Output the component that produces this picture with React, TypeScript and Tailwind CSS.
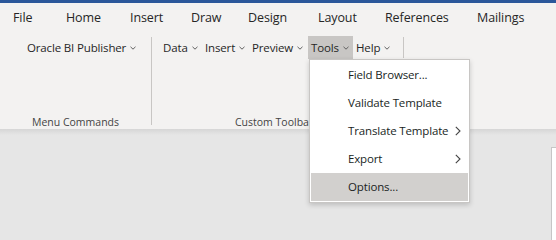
import React from 'react';

const font = '"Segoe UI", "Open Sans", "Noto Sans", sans-serif';

function Caret({ className = '' }: { className?: string }) {
  return (
    <svg width="6" height="4" viewBox="0 0 6 4" className={className} fill="none">
      <path d="M0.5 0.8 L3 3.2 L5.5 0.8" stroke="#5f5f5f" strokeWidth="1" />
    </svg>
  );
}

function Chevron() {
  return (
    <svg width="6" height="10" viewBox="0 0 6 10" fill="none">
      <path d="M0.8 0.8 L5 5 L0.8 9.2" stroke="#444" strokeWidth="1.1" />
    </svg>
  );
}

const tabs: [string, number][] = [
  ['File', 53], ['Home', 64], ['Insert', 61], ['Draw', 57],
  ['Design', 70], ['Layout', 67], ['References', 92], ['Mailings', 70],
];

const toolbar: [string, number][] = [
  ['Data', 42], ['Insert', 47], ['Preview', 59], ['Tools', 45], ['Help', 44],
];

const menuItems = [
  { label: 'Field Browser...' },
  { label: 'Validate Template' },
  { label: 'Translate Template', sub: true },
  { label: 'Export', sub: true },
  { label: 'Options...', active: true },
];

export default function App() {
  return (
    <div
      className="relative w-[556px] h-[240px] overflow-hidden bg-[#e6e6e6]"
      style={{ fontFamily: font }}
    >
      <div className="h-[3px] bg-[#2b579a]" />

      {/* ribbon */}
      <div className="h-[126px] bg-[#f3f2f1] flex flex-col">
        <div className="h-[30px] flex items-center pl-[13px] text-[12.5px] tracking-[-0.1px] text-[#262626]">
          {tabs.map(([t, w]) => (
            <span key={t} className="shrink-0 whitespace-nowrap" style={{ width: w }}>{t}</span>
          ))}
        </div>

        <div className="flex flex-1">
          {/* Menu Commands group */}
          <div className="w-[151px] flex flex-col">
            <div className="mt-[3px] h-[23px] flex items-center pl-[27px] text-[11.5px] tracking-[-0.15px] text-[#262626] whitespace-nowrap">
              <span>Oracle BI Publisher</span>
              <Caret className="ml-[4px] mt-[1px]" />
            </div>
            <div className="mt-auto mb-[-2px] text-center text-[10.5px] text-[#444] whitespace-nowrap">Menu Commands</div>
          </div>

          <div className="w-px bg-[#c8c6c4] mt-[4px] mb-[4px]" />

          {/* Custom Toolbar group */}
          <div className="flex-1 flex flex-col">
            <div className="mt-[3px] flex pl-[8px]">
              {toolbar.map(([t, w]) => (
                <div
                  key={t}
                  className={`h-[23px] flex items-center pl-[3px] text-[11.5px] tracking-[-0.15px] text-[#262626] shrink-0 whitespace-nowrap ${t === 'Tools' ? 'bg-[#c8c6c4]' : ''}`}
                  style={{ width: w }}
                >
                  <span>{t}</span>
                  <Caret className="ml-[4px] mt-[1px]" />
                </div>
              ))}
              <div className="ml-[6px] mt-[1px] w-px h-[21px] bg-[#c8c6c4]" />
            </div>
            <div className="mt-auto mb-[-2px] pl-[83px] text-[10.5px] text-[#444] whitespace-nowrap">Custom Toolbar</div>
          </div>
        </div>
      </div>
      <div className="h-[6px] bg-gradient-to-b from-[#d6d6d6] to-[#e6e6e6]" />

      {/* document page edge */}
      <div className="absolute left-[551px] top-[147px] w-[20px] h-[100px] bg-white border border-[#c6c6c6]" />

      {/* Tools dropdown */}
      <div className="absolute left-[309px] top-[59px] w-[161px] bg-white border border-[#c8c6c4] p-px shadow-[0_2px_5px_rgba(0,0,0,0.18)]">
        {menuItems.map((m) => (
          <div
            key={m.label}
            className={`h-[28px] flex items-center pl-[37px] pr-[7px] text-[11.5px] tracking-[-0.15px] text-[#201f1e] whitespace-nowrap ${m.active ? 'bg-[#d2d0ce]' : ''}`}
          >
            <span className="flex-1">{m.label}</span>
            {m.sub && <Chevron />}
          </div>
        ))}
      </div>
    </div>
  );
}
